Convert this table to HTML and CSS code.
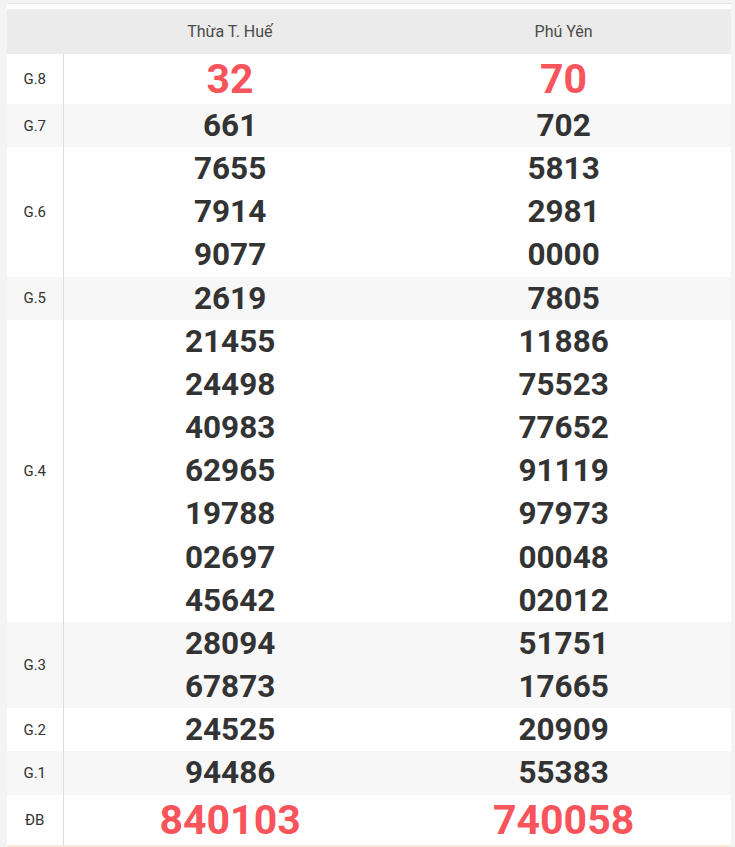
FILE: index.html
```html
<!DOCTYPE html>
<html lang="vi">
<head>
<meta charset="utf-8">
<link rel="stylesheet" href="styles.css">
</head>
<body>
<div class="card">
  <table class="kq">
    <thead>
      <tr><th class="lbl"></th><th>Thừa T. Huế</th><th>Phú Yên</th></tr>
    </thead>
    <tbody>
      <tr class="big"><td class="lbl">G.8</td><td class="red">32</td><td class="red">70</td></tr>
      <tr class="alt"><td class="lbl">G.7</td><td><div>661</div></td><td><div>702</div></td></tr>
      <tr><td class="lbl">G.6</td><td><div>7655</div><div>7914</div><div>9077</div></td><td><div>5813</div><div>2981</div><div>0000</div></td></tr>
      <tr class="alt"><td class="lbl">G.5</td><td><div>2619</div></td><td><div>7805</div></td></tr>
      <tr><td class="lbl">G.4</td><td><div>21455</div><div>24498</div><div>40983</div><div>62965</div><div>19788</div><div>02697</div><div>45642</div></td><td><div>11886</div><div>75523</div><div>77652</div><div>91119</div><div>97973</div><div>00048</div><div>02012</div></td></tr>
      <tr class="alt"><td class="lbl">G.3</td><td><div>28094</div><div>67873</div></td><td><div>51751</div><div>17665</div></td></tr>
      <tr><td class="lbl">G.2</td><td><div>24525</div></td><td><div>20909</div></td></tr>
      <tr class="alt"><td class="lbl">G.1</td><td><div>94486</div></td><td><div>55383</div></td></tr>
      <tr class="big"><td class="lbl">ĐB</td><td class="red">840103</td><td class="red">740058</td></tr>
    </tbody>
  </table>
  <div class="foot"></div>
</div>
</body>
</html>
```
FILE: styles.css
```css
html, body {
  margin: 0;
  padding: 0;
  background: #f4f4f6;
  font-family: Roboto, "Liberation Sans", sans-serif;
  color: #333;
}
.card {
  margin: 3px 4px 0 7px;
  border-top: 1px solid #e6e6e6;
  background: #fff;
  padding-top: 5px;
}
.kq {
  width: 100%;
  border-collapse: collapse;
  table-layout: fixed;
}
.kq th {
  background: #ebebeb;
  height: 45px;
  font-weight: 400;
  font-size: 16px;
  color: #4a4a4a;
  padding: 0;
  text-align: center;
}
.kq th.lbl { width: 56px; }
.kq td {
  padding: 0;
  text-align: center;
  font-weight: 700;
  font-size: 31.5px;
  color: #333;
}
.kq td div {
  height: 43.17px;
  line-height: 43.17px;
}
.kq td.lbl {
  font-size: 15px;
  font-weight: 400;
  color: #333;
  border-right: 1px solid #dcdcdc;
}
.kq tr.alt td { background: #f7f7f7; }
.kq tr.big td { height: 50px; }
.kq td.red {
  color: #f8545c;
  font-size: 41px;
  line-height: 50px;
}
.foot {
  height: 10px;
  border-top: 2px solid #f7ead6;
  background: #fffdf8;
}
```
